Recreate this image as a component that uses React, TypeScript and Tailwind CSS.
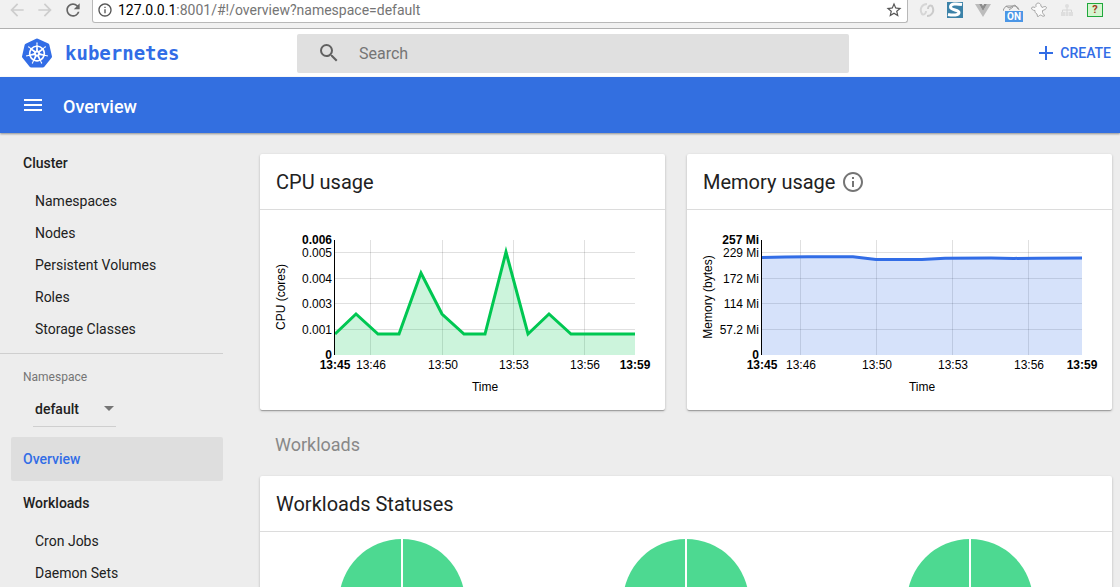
import React from "react";
import {
  MdAdd,
  MdArrowBack,
  MdArrowForward,
  MdInfoOutline,
  MdMenu,
  MdRefresh,
  MdSearch,
  MdStarBorder,
} from "react-icons/md";
import { SiKubernetes } from "react-icons/si";

const clusterLinks = ["Namespaces", "Nodes", "Persistent Volumes", "Roles", "Storage Classes"];
const workloadLinks = ["Cron Jobs", "Daemon Sets"];
const statuses = ["Deployments", "Pods", "Replica Sets"];

type Tick = { at: number; label: string; bold?: boolean };

type ChartProps = {
  title: string;
  width: number;
  left: number;
  right: number;
  color: string;
  yLabel: string;
  yTicks: Tick[];
  xTicks: Tick[];
  points: number[][];
};

const PLOT_TOP = 30;
const PLOT_BOTTOM = 145;

const UsageChart = ({ title, width, left, right, color, yLabel, yTicks, xTicks, points }: ChartProps) => {
  const line = points.map(([x, y]) => `${x},${y}`).join(" ");
  return (
    <svg
      viewBox={`0 0 ${width} 200`}
      className="block h-auto w-full font-['Liberation_Sans',Arial,sans-serif] text-[12px]"
      role="img"
      aria-label={title}
    >
      <g stroke="#000" strokeOpacity="0.12" shapeRendering="crispEdges">
        {yTicks.filter((t) => !t.bold).map((t) => (
          <line key={t.label} x1={left} x2={right} y1={t.at + 0.5} y2={t.at + 0.5} />
        ))}
        {xTicks.filter((t) => !t.bold).map((t) => (
          <line key={t.label} x1={t.at + 0.5} x2={t.at + 0.5} y1={PLOT_TOP} y2={PLOT_BOTTOM} />
        ))}
      </g>
      <polygon points={`${left},${PLOT_BOTTOM} ${line} ${right},${PLOT_BOTTOM}`} fill={color} fillOpacity="0.2" />
      <polyline points={line} fill="none" stroke={color} strokeWidth="3" />
      <line x1={left - 0.5} x2={left - 0.5} y1={PLOT_TOP} y2={PLOT_BOTTOM} stroke="#000" />
      {yTicks.map((t) => (
        <text key={t.label} x={left - 3} y={t.bold ? t.at + 4 : t.at + 5} textAnchor="end" fontWeight={t.bold ? 700 : 400}>
          {t.label}
        </text>
      ))}
      {xTicks.map((t) => (
        <text key={t.label} x={t.bold ? t.at : t.at + 1} y="159" textAnchor="middle" fontWeight={t.bold ? 700 : 400}>
          {t.label}
        </text>
      ))}
      <text x={(left + right) / 2} y="181" textAnchor="middle">
        Time
      </text>
      <text transform="translate(25 87) rotate(-90)" textAnchor="middle">
        {yLabel}
      </text>
    </svg>
  );
};

const BrowserBar = () => (
  <div className="flex h-[29px] shrink-0 items-start border-b border-[#b0b0b0] bg-[#f1f1f1]">
    <div className="flex h-5 w-[92px] shrink-0 items-center gap-2 pl-[7px]">
      <button aria-label="Back" className="text-[#cdcdcd]">
        <MdArrowBack size={20} />
      </button>
      <button aria-label="Forward" className="text-[#cdcdcd]">
        <MdArrowForward size={20} />
      </button>
      <button aria-label="Reload" className="text-[#666]">
        <MdRefresh size={20} />
      </button>
    </div>
    <div className="flex h-[23px] flex-1 rounded-b-[3px] border border-t-0 border-[#b8b8b8] bg-white px-1">
      <div className="flex h-5 flex-1 items-center">
        <MdInfoOutline size={16} className="mr-[5px] shrink-0 text-[#555]" />
        <p className="text-sm leading-5 text-[#757575]">
          <span className="text-black">127.0.0.1</span>:8001/#!/overview?namespace=default
        </p>
        <button aria-label="Bookmark" className="ml-auto text-[#555]">
          <MdStarBorder size={18} />
        </button>
      </div>
    </div>
    <div className="flex h-5 w-[212px] shrink-0 items-center gap-3 pl-[11px]">
      <svg width="16" height="16" viewBox="0 0 16 16" fill="none" strokeWidth="2">
        <path d="M8 2C3 2 0 7 3 12c2 1 4 0 4-3" stroke="#d6d6d6" />
        <path d="M8 14c5 0 8-5 5-10-2-1-4 0-4 3" stroke="#cbcbcb" />
      </svg>
      <svg width="16" height="16" viewBox="0 0 16 16">
        <rect width="16" height="16" fill="#3c82a8" />
        <path
          d="M15 2.500C9 1.500 3.500 1.500 3.500 5c0 3.500 8.500 2.500 8.500 5.500 0 3-6 3-11 2"
          fill="none"
          stroke="#fff"
          strokeWidth="3"
        />
      </svg>
      <svg width="16" height="16" viewBox="0 0 16 16">
        <path d="M0 2h4l4 7 4-7h4L8 15z" fill="#bcbcbc" />
        <path d="M4 2h3l1 2 1-2h3L8 9z" fill="#8c8c8c" />
      </svg>
      <span className="relative block size-4">
        <svg width="18" height="16" viewBox="0 0 18 16" fill="none" stroke="#999">
          <path d="M0 9c1-3 2-5 5-5h6c3 0 4 1 5 4M3 4l3 2 6-3 3 4M6 8l4-3" />
        </svg>
        <span className="absolute top-[9px] left-[2px] h-[11px] w-[18px] bg-[#4b96e6] text-center text-[10px] leading-[11px] font-bold text-white">
          ON
        </span>
      </span>
      <svg width="16" height="16" viewBox="0 0 16 16" fill="#fafafa" stroke="#a5a5a5">
        <path d="M5 4.500C4 0 10 0 10 4l1 1.500c2-1 4-1.500 4.500 0 0 1.500-2 2.500-4 3v2c0 1 2 2 2 3.500-2 1-3-1-4-1s-2 2-3 1.500L6 12c-2-1-2-2-2-3.500-2 0-3.500-1-3.500-2.500C1 4.500 3 5 4 5.500z" />
      </svg>
      <svg width="16" height="16" viewBox="0 0 16 16" fill="#dedede">
        <path d="M8 5v3M3.500 10V8h9v2M8 8v2" fill="none" stroke="#d6d6d6" />
        <circle cx="8" cy="4" r="2" />
        <path d="M2 10h4v4H2zM6.500 10h3v4h-3zM10 10h4v4h-4z" />
      </svg>
      <span className="flex h-[14px] w-4 items-center justify-center border border-[#1fa83c] bg-[#d5f5d0] text-[11px] font-bold text-[#a33a20]">
        ?
      </span>
    </div>
  </div>
);

const Header = () => (
  <header className="flex h-12 shrink-0 items-center bg-white">
    <a href="#overview" className="flex w-[297px] shrink-0 items-center gap-[13px] pl-[22px] text-[#326de6]">
      <SiKubernetes size={30} />
      <span className="font-['DejaVu_Sans_Mono',monospace] text-[19px] leading-6 font-bold">kubernetes</span>
    </a>
    <label className="flex h-[39px] flex-1 items-center rounded-[2px] bg-[#e0e0e0] pl-5">
      <MdSearch size={24} className="shrink-0 text-[#616161]" />
      <input
        type="search"
        aria-label="Search"
        placeholder="Search"
        className="ml-[18px] min-w-0 flex-1 bg-transparent pt-[2px] text-base text-black outline-none placeholder:text-[#757575]"
      />
    </label>
    <div className="flex w-[271px] shrink-0 justify-end pr-[9px]">
      <button className="flex items-center gap-[2px] text-sm font-medium text-[#326de6]">
        <MdAdd size={24} />
        CREATE
      </button>
    </div>
  </header>
);

const NavGroup = ({ title, links }: { title: string; links: string[] }) => (
  <div>
    <a href={`#${title}`} className="flex h-11 items-center pl-[23px] font-medium">
      {title}
    </a>
    {links.map((link) => (
      <a key={link} href={`#${link}`} className="flex h-8 items-center pl-[35px]">
        {link}
      </a>
    ))}
  </div>
);

const Sidebar = () => (
  <nav className="w-[223px] shrink-0 pt-2 text-sm text-[#212121]">
    <NavGroup title="Cluster" links={clusterLinks} />
    <div className="mt-2 border-t border-[#cfcfcf] pt-[15px] pb-[10px] pl-[23px]">
      <label htmlFor="namespace" className="block text-xs leading-4 text-[#757575]">
        Namespace
      </label>
      <div className="mt-[6px] ml-[10px] flex h-9 w-[83px] items-center border-b border-[#cfcfcf]">
        <select
          id="namespace"
          defaultValue="default"
          className="min-w-0 flex-1 appearance-none bg-transparent pl-[2px] font-medium outline-none"
        >
          <option>default</option>
        </select>
        <svg width="12" height="6" viewBox="0 0 12 6" className="mr-px shrink-0" fill="#757575">
          <path d="M1 0h10L6 5z" />
        </svg>
      </div>
    </div>
    <a
      href="#overview"
      className="ml-[11px] flex h-11 items-center rounded-[2px] bg-[#dedede] pl-3 font-medium text-[#326de6]"
    >
      Overview
    </a>
    <NavGroup title="Workloads" links={workloadLinks} />
  </nav>
);

const Card = ({
  title,
  icon,
  children,
}: {
  title: string;
  icon?: React.ReactNode;
  children: React.ReactNode;
}) => (
  <section className="rounded-[2px] bg-white shadow-[0_1px_3px_rgba(0,0,0,0.2),0_1px_1px_rgba(0,0,0,0.14),0_2px_1px_-1px_rgba(0,0,0,0.12)]">
    <div className="flex h-14 items-center gap-[6px] border-b border-[#dcdcdc] px-4">
      <h2 className="text-xl text-[#212121]">{title}</h2>
      {icon}
    </div>
    {children}
  </section>
);

const App = () => {
  return (
    <div className="flex h-screen flex-col overflow-hidden bg-[#ededed] font-[Roboto,sans-serif]">
      <BrowserBar />
      <Header />
      <div className="z-10 flex h-14 shrink-0 items-center gap-[18px] bg-[#336fe0] pl-[21px] text-white shadow-[0_1px_2px_rgba(0,0,0,0.4)]">
        <button aria-label="Menu">
          <MdMenu size={24} />
        </button>
        <h1 className="pt-[3px] text-lg font-medium">Overview</h1>
      </div>
      <div className="flex min-h-0 flex-1 overflow-hidden">
        <Sidebar />
        <main className="min-w-0 flex-1 pt-[21px] pr-2 pl-[37px]">
          <div className="grid grid-cols-[81fr_85fr] gap-[22px]">
            <Card title="CPU usage">
              <UsageChart
                title="CPU usage"
                width={405}
                left={75}
                right={375}
                color="#00c752"
                yLabel="CPU (cores)"
                yTicks={[
                  { at: 30, label: "0.006", bold: true },
                  { at: 42, label: "0.005" },
                  { at: 68, label: "0.004" },
                  { at: 93, label: "0.003" },
                  { at: 119, label: "0.001" },
                  { at: 145, label: "0", bold: true },
                ]}
                xTicks={[
                  { at: 75, label: "13:45", bold: true },
                  { at: 110, label: "13:46" },
                  { at: 182, label: "13:50" },
                  { at: 253, label: "13:53" },
                  { at: 324, label: "13:56" },
                  { at: 375, label: "13:59", bold: true },
                ]}
                points={[
                  [75, 124], [96, 104], [118, 124], [139, 124], [161, 63], [182, 104], [204, 124],
                  [225, 124], [246, 42], [268, 124], [289, 104], [311, 124], [375, 124],
                ]}
              />
            </Card>
            <Card title="Memory usage" icon={<MdInfoOutline size={24} className="text-[#757575]" />}>
              <UsageChart
                title="Memory usage"
                width={425}
                left={75}
                right={395}
                color="#326de6"
                yLabel="Memory (bytes)"
                yTicks={[
                  { at: 30, label: "257 Mi", bold: true },
                  { at: 42, label: "229 Mi" },
                  { at: 68, label: "172 Mi" },
                  { at: 93, label: "114 Mi" },
                  { at: 119, label: "57.2 Mi" },
                  { at: 145, label: "0", bold: true },
                ]}
                xTicks={[
                  { at: 75, label: "13:45", bold: true },
                  { at: 113, label: "13:46" },
                  { at: 189, label: "13:50" },
                  { at: 265, label: "13:53" },
                  { at: 341, label: "13:56" },
                  { at: 395, label: "13:59", bold: true },
                ]}
                points={[
                  [75, 47.5], [98, 47], [121, 46.8], [166, 46.8], [189, 49.4], [235, 49.4],
                  [258, 48.2], [304, 48], [327, 48.4], [350, 48.2], [395, 48],
                ]}
              />
            </Card>
          </div>
          <h2 className="flex h-[66px] items-center px-[15px] pt-1 text-lg text-[#888]">Workloads</h2>
          <Card title="Workloads Statuses">
            <div className="grid grid-cols-3 justify-items-center pt-[7px] pb-8">
              {statuses.map((status) => (
                <svg key={status} width="126" height="126" viewBox="0 0 126 126" role="img" aria-label={status}>
                  <circle cx="63" cy="63" r="63" fill="#4dd991" />
                  <path d="M63 0v63" stroke="#fff" strokeWidth="2" />
                </svg>
              ))}
            </div>
          </Card>
        </main>
      </div>
    </div>
  );
};

export default App;
